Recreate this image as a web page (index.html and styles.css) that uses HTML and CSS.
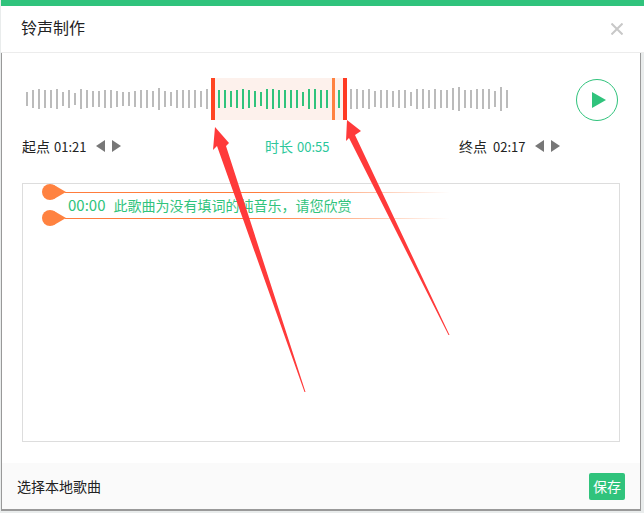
FILE: index.html
```html
<!DOCTYPE html>
<html lang="zh-CN">
<head>
  <meta charset="UTF-8">
  <meta name="viewport" content="width=device-width, initial-scale=1.0">
  <title>铃声制作</title>
  <link rel="stylesheet" href="styles.css">
</head>
<body>
  <div class="page">
    <!-- 标题 -->
    <header class="head">
      <h1>铃声制作</h1>
      <svg class="close" width="12" height="12" viewBox="0 0 12 12"><path d="M0.5 0.5L11.5 11.5M11.5 0.5L0.5 11.5" stroke="#c8c8c8" stroke-width="2" fill="none"/></svg>
    </header>

    <div class="dialog">
      <!-- 波形 -->
      <div class="waveRow">
        <div class="wave">
          <div class="sel"><i class="hd hdL"></i><i class="hd hdM"></i><i class="hd hdR"></i></div>
          <span style="height:14px"></span><span style="height:18px"></span><span style="height:20px"></span><span style="height:18px"></span><span style="height:18px"></span><span style="height:20px"></span><span style="height:14px"></span><span style="height:18px"></span><span style="height:12px"></span><span style="height:20px"></span><span style="height:18px"></span><span style="height:16px"></span><span style="height:16px"></span><span style="height:18px"></span><span style="height:18px"></span><span style="height:16px"></span>
          <span style="height:14px"></span><span style="height:14px"></span><span style="height:16px"></span><span style="height:18px"></span><span style="height:18px"></span><span style="height:16px"></span><span style="height:22px"></span><span style="height:16px"></span><span style="height:14px"></span><span style="height:18px"></span><span style="height:18px"></span><span style="height:18px"></span><span style="height:18px"></span><span style="height:16px"></span><span style="height:20px"></span>
          <span class="off" style="height:18px"></span>
          <span class="on" style="height:18px"></span><span class="on" style="height:18px"></span><span class="on" style="height:16px"></span><span class="on" style="height:18px"></span><span class="on" style="height:20px"></span><span class="on" style="height:18px"></span><span class="on" style="height:16px"></span><span class="on" style="height:14px"></span><span class="on" style="height:20px"></span><span class="on" style="height:20px"></span><span class="on" style="height:18px"></span><span class="on" style="height:18px"></span><span class="on" style="height:18px"></span><span class="on" style="height:18px"></span><span class="on" style="height:14px"></span><span class="on" style="height:20px"></span><span class="on" style="height:20px"></span><span class="on" style="height:18px"></span><span class="on" style="height:18px"></span>
          <span class="off" style="height:18px"></span>
          <span class="on" style="height:18px"></span>
          <span class="off" style="height:18px"></span>
          <span style="height:20px"></span><span style="height:20px"></span><span style="height:18px"></span><span style="height:20px"></span><span style="height:16px"></span><span style="height:18px"></span><span style="height:18px"></span><span style="height:16px"></span><span style="height:18px"></span><span style="height:18px"></span><span style="height:14px"></span><span style="height:20px"></span><span style="height:20px"></span><span style="height:18px"></span><span style="height:20px"></span><span style="height:18px"></span><span style="height:18px"></span><span style="height:22px"></span><span style="height:24px"></span><span style="height:18px"></span><span style="height:18px"></span><span style="height:20px"></span><span style="height:20px"></span><span style="height:20px"></span><span style="height:16px"></span><span style="height:24px"></span><span style="height:18px"></span>
        </div>
        <a href="#" class="play"><svg width="14" height="16" viewBox="0 0 14 16"><path d="M0 0L14 8L0 16Z" fill="#30c37c"/></svg></a>
      </div>

      <!-- 시간 -->
      <div class="times">
        <div class="time"><b>起点</b> <em>01:21</em>
          <span class="step"><i class="prev"></i><i class="next"></i></span>
        </div>
        <div class="time len"><b>时长</b> <em>00:55</em></div>
        <div class="time"><b>终点</b> <em class="wide">02:17</em>
          <span class="step"><i class="prev"></i><i class="next"></i></span>
        </div>
      </div>

      <!-- 가사 -->
      <div class="lyric">
        <div class="mark">
          <svg class="pin" width="25" height="16" viewBox="0 0 25 16"><circle cx="9" cy="8" r="8" fill="#ff8240"/><path d="M13 1L25 8L13 15Z" fill="#ff8240"/></svg>
        </div>
        <div class="line"><span class="stamp">00:00</span><span>此歌曲为没有填词的纯音乐，请您欣赏</span></div>
        <div class="mark">
          <svg class="pin" width="25" height="16" viewBox="0 0 25 16"><circle cx="9" cy="8" r="8" fill="#ff8240"/><path d="M13 1L25 8L13 15Z" fill="#ff8240"/></svg>
        </div>
      </div>

      <footer class="foot">
        <a href="#" class="local">选择本地歌曲</a>
        <a href="#" class="save">保存</a>
      </footer>
    </div>

    <!-- 빨간 화살표 -->
    <svg class="arrows" width="644" height="513" viewBox="0 0 644 513">
      <path d="M215 127L229 143L226 146L305.5 392L304.5 392L217 146L213 150Z" fill="#ff3a3a"/>
      <path d="M347 120L361 131L355 135L449.5 335L448.5 335L349 138L346 141Z" fill="#ff3a3a"/>
    </svg>
  </div>
</body>
</html>
```

FILE: styles.css
```css
/* reset */
* {
  margin: 0;
  padding: 0;
  box-sizing: border-box;
}
a {
  text-decoration: none;
  color: inherit;
}
i, em {
  font-style: normal;
}
body {
  background: #e9ecec;
  font-family: "Noto Sans CJK SC", "Liberation Sans", sans-serif;
  color: #222;
  overflow: hidden;
}
.page {
  position: relative;
  height: 513px;
  padding-left: 1px;
}

/* head */
.head {
  display: flex;
  justify-content: space-between;
  align-items: center;
  height: 53px;
  padding: 0 21px 4px 20px;
  background: #fff;
  border-top: 6px solid #30c37c;
  border-bottom: 1px solid #ececec;
}
.head h1 {
  font-size: 16px;
  font-weight: 400;
}
.close {
  margin-top: 3px;
}

/* dialog */
.dialog {
  width: 640px;
  height: 458px;
  background: #fff;
  border-left: 1px solid #999;
  border-right: 1px solid #999;
  border-bottom: 2px solid #999;
}

/* wave */
.waveRow {
  display: flex;
  padding: 25px 0 0 24px;
}
.wave {
  position: relative;
  display: flex;
  align-items: center;
  gap: 4px;
  width: 482px;
  height: 42px;
}
.wave span {
  position: relative;
  width: 2px;
  background: #bbb;
}
.wave span.on {
  background: #30c37c;
}
.wave span.off {
  visibility: hidden;
}
.sel {
  position: absolute;
  left: 185px;
  top: 0;
  width: 136px;
  height: 42px;
  background: #fdf1ec;
}
.hd {
  position: absolute;
  top: 0;
  height: 42px;
  z-index: 1;
}
.hdL {
  left: 0;
  width: 4px;
  background: #ff4522;
}
.hdM {
  left: 121px;
  width: 3px;
  background: #ff8240;
}
.hdR {
  right: 0;
  width: 4px;
  background: #ff3a22;
}
.play {
  display: flex;
  align-items: center;
  justify-content: center;
  width: 42px;
  height: 42px;
  margin: 1px 0 0 68px;
  padding-left: 4px;
  border: 1px solid #30c37c;
  border-radius: 50%;
}

/* time */
.times {
  display: grid;
  grid-template-columns: 243px 194px auto;
  align-items: center;
  height: 24px;
  margin-top: 13px;
  padding-left: 20px;
}
.time {
  display: flex;
  align-items: center;
  font-size: 13px;
}
.time b {
  font-size: 14px;
  font-weight: 400;
}
.time em {
  margin-left: 4px;
}
.time em.wide {
  margin-left: 6px;
}
.len {
  color: #2cc79b;
}
.step {
  display: flex;
  gap: 7px;
  margin-left: 10px;
}
.step i {
  width: 0;
  height: 0;
  border-top: 6.5px solid transparent;
  border-bottom: 6.5px solid transparent;
}
.prev {
  border-right: 9px solid #777;
}
.next {
  border-left: 9px solid #777;
}

/* lyric */
.lyric {
  width: 598px;
  height: 259px;
  margin: 25px 0 0 20px;
  padding-top: 8px;
  border: 1px solid #ddd;
}
.mark {
  position: relative;
  width: 385px;
  height: 1px;
  margin-left: 42px;
  background: linear-gradient(to right, #ff7c3c 0, #ff7c3c 50%, rgba(255, 124, 60, .4) 82%, rgba(255, 124, 60, 0) 100%);
}
.pin {
  position: absolute;
  left: -24px;
  top: -8px;
}
.line {
  display: flex;
  align-items: center;
  gap: 8px;
  height: 25px;
  padding-bottom: 2px;
  margin-left: 45px;
  font-size: 14px;
  color: #30c37c;
}
.stamp {
  font-size: 15px;
}

/* foot */
.foot {
  display: flex;
  justify-content: space-between;
  align-items: center;
  height: 46px;
  margin-top: 21px;
  padding: 0 15px;
  background: #fafafa;
  font-size: 14px;
}
.save {
  width: 36px;
  height: 27px;
  line-height: 27px;
  text-align: center;
  color: #fff;
  background: #30c37c;
  border-radius: 2px;
}

/* annotation */
.arrows {
  position: absolute;
  left: 0;
  top: 0;
  pointer-events: none;
}
```
